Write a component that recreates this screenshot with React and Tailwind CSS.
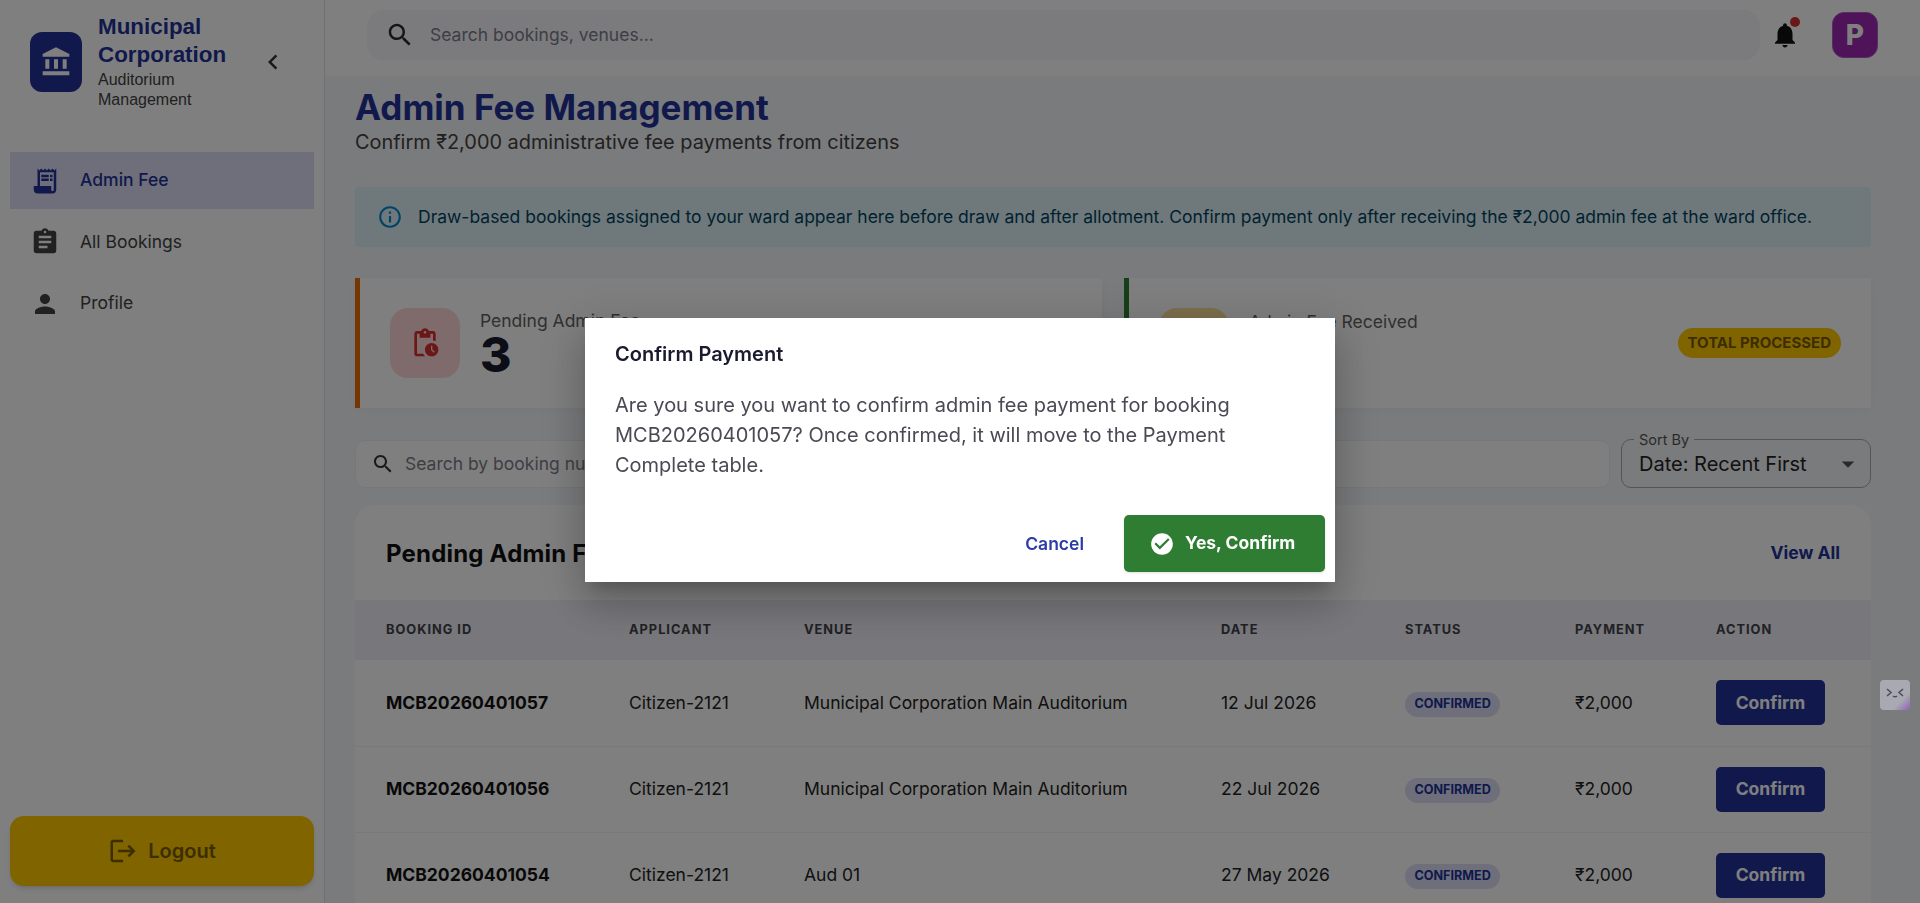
import React from "react";

const Icon = ({ d, className }) => (
  <svg viewBox="0 0 24 24" fill="currentColor" className={className}>
    <path d={d} />
  </svg>
);

const paths = {
  bank: "M4 10h3v7H4zM10.5 10h3v7h-3zM2 19h20v3H2zM17 10h3v7h-3zM12 1 2 6v2h20V6z",
  chevron: "M15.41 7.41 14 6l-6 6 6 6 1.41-1.41L10.83 12z",
  search:
    "M15.5 14h-.79l-.28-.27C15.41 12.59 16 11.11 16 9.5 16 5.91 13.09 3 9.5 3S3 5.91 3 9.5 5.91 16 9.5 16c1.61 0 3.09-.59 4.23-1.57l.27.28v.79l5 4.99L20.49 19l-4.99-5zm-6 0C7.01 14 5 11.99 5 9.5S7.01 5 9.5 5 14 7.01 14 9.5 11.99 14 9.5 14z",
  bell: "M12 22c1.1 0 2-.9 2-2h-4c0 1.1.89 2 2 2zm6-6v-5c0-3.07-1.64-5.64-4.5-6.32V4c0-.83-.67-1.5-1.5-1.5s-1.5.67-1.5 1.5v.68C7.63 5.36 6 7.92 6 11v5l-2 2v1h16v-1l-2-2z",
  assignment:
    "M19 3h-4.18C14.4 1.84 13.3 1 12 1c-1.3 0-2.4.84-2.82 2H5c-1.1 0-2 .9-2 2v14c0 1.1.9 2 2 2h14c1.1 0 2-.9 2-2V5c0-1.1-.9-2-2-2zm-7 0c.55 0 1 .45 1 1s-.45 1-1 1-1-.45-1-1 .45-1 1-1zm2 14H7v-2h7v2zm3-4H7v-2h10v2zm0-4H7V7h10v2z",
  person:
    "M12 12c2.21 0 4-1.79 4-4s-1.79-4-4-4-4 1.79-4 4 1.79 4 4 4zm0 2c-2.67 0-8 1.34-8 4v2h16v-2c0-2.66-5.33-4-8-4z",
  receipt:
    "M19.5 3.5 18 2l-1.5 1.5L15 2l-1.5 1.5L12 2l-1.5 1.5L9 2 7.5 3.5 6 2v14H3v3c0 1.66 1.34 3 3 3h12c1.66 0 3-1.34 3-3V2l-1.5 1.5zM19 19c0 .55-.45 1-1 1s-1-.45-1-1v-3H8V5h11v14zM9 7h6v2H9zm7 0h2v2h-2zm-7 3h6v2H9zm7 0h2v2h-2z",
  pending:
    "M17 12c-2.76 0-5 2.24-5 5s2.24 5 5 5 5-2.24 5-5-2.24-5-5-5zm1.65 7.35L16.5 17.2V14h1v2.79l1.85 1.85-.7.71zM18 3h-3.18C14.4 1.84 13.3 1 12 1s-2.4.84-2.82 2H6c-1.1 0-2 .9-2 2v15c0 1.1.9 2 2 2h6.11c-.59-.57-1.07-1.25-1.42-2H6V5h2v3h8V5h2v5.08c.71.1 1.38.31 2 .6V5c0-1.1-.9-2-2-2zm-6 2c-.55 0-1-.45-1-1s.45-1 1-1 1 .45 1 1-.45 1-1 1z",
  check:
    "M12 2C6.48 2 2 6.48 2 12s4.48 10 10 10 10-4.48 10-10S17.52 2 12 2zm-2 15-5-5 1.41-1.41L10 14.17l7.59-7.59L19 8l-9 9z",
  info: "M11 7h2v2h-2zm0 4h2v6h-2zm1-9C6.48 2 2 6.48 2 12s4.48 10 10 10 10-4.48 10-10S17.52 2 12 2zm0 18c-4.41 0-8-3.59-8-8s3.59-8 8-8 8 3.59 8 8-3.59 8-8 8z",
  logout:
    "m17 7-1.41 1.41L18.17 11H8v2h10.17l-2.58 2.58L17 17l5-5zM4 5h8V3H4c-1.1 0-2 .9-2 2v14c0 1.1.9 2 2 2h8v-2H4V5z",
  caret: "m7 10 5 5 5-5z",
};

const navItems = [
  { label: "Admin Fee", icon: paths.receipt, active: true },
  { label: "All Bookings", icon: paths.assignment },
  { label: "Profile", icon: paths.person },
];

const rows = [
  { id: "MCB20260401057", venue: "Municipal Corporation Main Auditorium", date: "12 Jul 2026" },
  { id: "MCB20260401056", venue: "Municipal Corporation Main Auditorium", date: "22 Jul 2026" },
  { id: "MCB20260401054", venue: "Aud 01", date: "27 May 2026" },
];

const columns = ["Booking ID", "Applicant", "Venue", "Date", "Status", "Payment", "Action"];

const Sidebar = () => (
  <aside className="w-[325px] shrink-0 h-full bg-white border-r border-[#e0e0e0] flex flex-col pb-[17px]">
    <div className="flex items-center h-[124px] pl-[30px] pr-[36px] pb-[1px]">
      <div className="w-[52px] h-[60px] rounded-xl bg-[#233399] flex items-center justify-center text-white shrink-0">
        <Icon d={paths.bank} className="w-8 h-8" />
      </div>
      <div className="ml-4 flex-1 font-['Liberation_Sans',sans-serif]">
        <div className="text-[22.4px] leading-[28px] font-bold text-[#233399]">
          Municipal
          <br />
          Corporation
        </div>
        <div className="text-base leading-5 text-[#424242] mt-[1px]">
          Auditorium
          <br />
          Management
        </div>
      </div>
      <Icon d={paths.chevron} className="w-[30px] h-[30px] text-[#333]" />
    </div>

    <nav className="mt-7 px-[10px] flex flex-col gap-[4.5px]">
      {navItems.map((item) => (
        <div
          key={item.label}
          className={
            item.active
              ? "h-[57px] flex items-center pl-[20px] bg-[#dcdff5] text-[#233399] font-medium"
              : "h-[57px] flex items-center pl-[20px] text-[#424242]"
          }
        >
          <Icon d={item.icon} className="w-[30px] h-[30px] shrink-0" />
          <span className="ml-[20px] text-[17.5px]">{item.label}</span>
        </div>
      ))}
    </nav>

    <button className="mt-auto mx-[10px] h-[70px] rounded-[14px] bg-[#ffc800] text-[#7a5c00] flex items-center justify-center gap-[10px] shadow-md">
      <Icon d={paths.logout} className="w-[30px] h-[30px]" />
      <span className="text-xl font-semibold">Logout</span>
    </button>
  </aside>
);

const Header = () => (
  <header className="h-[76px] shrink-0 bg-white flex items-center pl-[42px] pr-[42px] pb-[6px]">
    <div className="w-[1393px] h-[50px] rounded-2xl bg-[#f6f6fb] flex items-center pl-[18px] text-[#2b2b2b]">
      <Icon d={paths.search} className="w-[30px] h-[30px]" />
      <span className="ml-[15px] text-[17.5px] text-[#7d7d8a]">Search bookings, venues...</span>
    </div>
    <div className="relative ml-[10px] w-[30px] h-[30px] text-[#111]">
      <Icon d={paths.bell} className="w-[30px] h-[30px]" />
      <span className="absolute -top-[3px] right-0 w-[10px] h-[10px] rounded-full bg-[#d32f2f]" />
    </div>
    <div className="ml-[32px] w-[46px] h-[46px] rounded-xl bg-[#9c27b0] border border-[#b15cc0] text-white flex items-center justify-center text-[28px] font-extrabold">
      P
    </div>
  </header>
);

const StatCard = ({ border, children }) => (
  <div
    className={`h-[130px] bg-white border-l-[5px] ${border} shadow-[0_2px_12px_rgba(0,0,0,0.04)] flex items-center pl-[30px] pr-[30px]`}
  >
    {children}
  </div>
);

const Content = () => (
  <div className="flex-1 overflow-hidden pl-[30px] pr-[49px] pt-[8px]">
    <h1 className="text-[35px] leading-[46px] font-bold text-[#233399]">Admin Fee Management</h1>
    <p className="text-[19.9px] leading-[26px] text-[#424242] -mt-[1px]">
      Confirm ₹2,000 administrative fee payments from citizens
    </p>

    <div className="mt-[32px] h-[60px] rounded bg-[#dff1f5] flex items-center pl-[22px] text-[#014361]">
      <Icon d={paths.info} className="w-[26px] h-[26px] text-[#0288d1] shrink-0" />
      <span className="ml-[15px] text-[17.5px]">
        Draw-based bookings assigned to your ward appear here before draw and after allotment. Confirm payment only
        after receiving the ₹2,000 admin fee at the ward office.
      </span>
    </div>

    <div className="mt-[31px] grid grid-cols-2 gap-[22px]">
      <StatCard border="border-[#ed6c02]">
        <div className="w-[70px] h-[70px] rounded-[18px] bg-[#ffd6d6] flex items-center justify-center text-[#d32f2f]">
          <Icon d={paths.pending} className="w-8 h-8" />
        </div>
        <div className="ml-5 mt-[3px]">
          <div className="text-[17.5px] leading-5 text-[#616161]">Pending Admin Fee</div>
          <div className="text-[48px] leading-[48px] font-extrabold text-[#1a1a2e]">3</div>
        </div>
      </StatCard>
      <StatCard border="border-[#2e7d32]">
        <div className="w-[70px] h-[70px] rounded-[18px] bg-[#fadc96]" />
        <div className="ml-5 self-start pt-[34px]">
          <div className="text-[17.5px] leading-5 text-[#616161]">Admin Fee Received</div>
        </div>
        <span className="ml-auto h-[30px] px-[10px] rounded-full bg-[#ffc800] text-[#7a5c00] text-[15px] font-bold flex items-center">
          TOTAL PROCESSED
        </span>
      </StatCard>
    </div>

    <div className="mt-[31px] flex gap-[11px]">
      <div className="flex-1 h-[48px] mt-[1px] rounded-[10px] bg-white border border-[#eeeeee] flex items-center pl-[15px] text-[#333]">
        <Icon d={paths.search} className="w-6 h-6" />
        <span className="ml-[10px] text-[17.5px] text-[#7d7d8a]">Search by booking number</span>
      </div>
      <div className="relative w-[250px] h-[49px] rounded-[10px] border border-[#a8a8a8] flex items-center pl-[17px] pr-[7px]">
        <span className="absolute -top-[8px] left-[12px] bg-[#f5f7fa] px-[5px] text-[14.5px] leading-4 text-[#555]">
          Sort By
        </span>
        <span className="text-xl text-[#222]">Date: Recent First</span>
        <Icon d={paths.caret} className="ml-auto w-[30px] h-[30px] text-[#555]" />
      </div>
    </div>

    <div className="mt-[17px] rounded-t-[20px] bg-white">
      <div className="h-[95px] flex items-center justify-between pl-[31px] pr-[31px] pt-[2px]">
        <h2 className="text-2xl font-bold tracking-[0.2px] text-[#111]">Pending Admin Fee</h2>
        <span className="text-[17.5px] font-bold text-[#233399]">View All</span>
      </div>
      <table className="w-full table-fixed border-collapse">
        <colgroup>
          <col className="w-[243px]" />
          <col className="w-[175px]" />
          <col className="w-[417px]" />
          <col className="w-[184px]" />
          <col className="w-[170px]" />
          <col className="w-[141px]" />
          <col />
        </colgroup>
        <thead>
          <tr className="h-[60px] bg-[#eeeef8]">
            {columns.map((col) => (
              <th
                key={col}
                className="pl-[31px] text-left text-[12.8px] font-bold uppercase tracking-[1px] text-[#424248]"
              >
                {col}
              </th>
            ))}
          </tr>
        </thead>
        <tbody>
          {rows.map((row) => (
            <tr key={row.id} className="h-[86px] border-b border-[#f2f2f2] text-[17.5px] text-[#222]">
              <td className="pl-[31px] font-bold text-[#111]">{row.id}</td>
              <td className="pl-[31px]">Citizen-2121</td>
              <td className="pl-[31px]">{row.venue}</td>
              <td className="pl-[31px]">{row.date}</td>
              <td className="pl-[31px]">
                <span className="inline-flex items-center h-[25px] mt-[2px] px-[9.5px] rounded-full bg-[#dcdff5] text-[#233399] text-[12.6px] font-bold">
                  CONFIRMED
                </span>
              </td>
              <td className="pl-[31px]">₹2,000</td>
              <td className="pl-[31px]">
                <button className="w-[109px] h-[45px] rounded-[5px] bg-[#233399] text-white text-[17.5px] font-bold">
                  Confirm
                </button>
              </td>
            </tr>
          ))}
        </tbody>
      </table>
    </div>
  </div>
);

const ConfirmDialog = () => (
  <div className="fixed inset-0 z-10 bg-black/50 flex items-center justify-center pb-[3px]">
    <div className="w-[750px] h-[264px] bg-white flex flex-col shadow-[0_11px_15px_-7px_rgba(0,0,0,0.2),0_24px_38px_3px_rgba(0,0,0,0.14),0_9px_46px_8px_rgba(0,0,0,0.12)]">
      <h3 className="h-[72px] shrink-0 flex items-center px-[30px] text-xl font-semibold text-[#1a1a2e]">
        Confirm Payment
      </h3>
      <p className="px-[30px] text-xl leading-[30px] text-[#4a4a55]">
        Are you sure you want to confirm admin fee payment for booking MCB20260401057? Once confirmed, it will move to
        the Payment Complete table.
      </p>
      <div className="mt-auto flex items-center justify-end p-[10px]">
        <button className="mr-[40px] pt-[1px] text-[17.5px] font-semibold text-[#2a3ba8]">Cancel</button>
        <button className="w-[201px] h-[57px] pl-[25px] rounded-[5px] bg-[#2e7d32] text-white flex items-center gap-[10px] shadow-sm">
          <Icon d={paths.check} className="w-[26px] h-[26px]" />
          <span className="text-[17.5px] font-bold">Yes, Confirm</span>
        </button>
      </div>
    </div>
  </div>
);

// floating extension button, sits above the backdrop
const FloatingFace = () => (
  <div className="fixed z-20 left-[1880px] top-[680px] w-[30px] h-[30px] rounded bg-[linear-gradient(135deg,#a9a9b2_70%,#8f63b8_100%)]">
    <svg viewBox="0 0 30 30" fill="none" stroke="#4b4b55" strokeWidth="1.5" className="w-[30px] h-[30px]">
      <path d="M7 9l4 3.5-4 3.5M23 9l-4 3.5 4 3.5M13 16q2 1.5 4 0" />
    </svg>
  </div>
);

export default function App() {
  return (
    <div className="h-screen overflow-hidden flex bg-[#f5f7fa] font-['Inter',sans-serif]">
      <Sidebar />
      <main className="flex-1 min-w-0 h-full flex flex-col">
        <Header />
        <Content />
      </main>
      <ConfirmDialog />
      <FloatingFace />
    </div>
  );
}
